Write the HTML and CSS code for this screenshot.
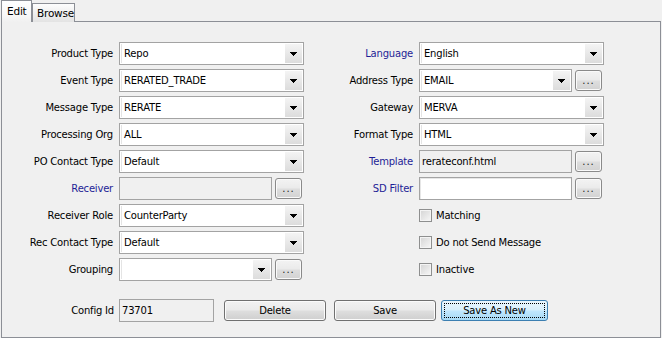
FILE: index.html
```html
<!DOCTYPE html>
<html lang="en">
<head>
  <meta charset="UTF-8">
  <title>Message Config</title>
  <link rel="stylesheet" href="styles.css">
</head>
<body>
  <div class="window">
    <div class="tabs">
      <div class="tab active">Edit</div>
      <div class="tab">Browse</div>
    </div>

    <div class="panel">
      <div class="form">
        <div class="col">
          <div class="row">
            <span class="lbl">Product Type</span>
            <div class="combo"><span class="val">Repo</span><span class="arrow"><svg width="7" height="4" viewBox="0 0 7 4"><polygon points="0,0 7,0 3.5,4" /></svg></span></div>
          </div>
          <div class="row">
            <span class="lbl">Event Type</span>
            <div class="combo"><span class="val">RERATED_TRADE</span><span class="arrow"><svg width="7" height="4" viewBox="0 0 7 4"><polygon points="0,0 7,0 3.5,4" /></svg></span></div>
          </div>
          <div class="row">
            <span class="lbl">Message Type</span>
            <div class="combo"><span class="val">RERATE</span><span class="arrow"><svg width="7" height="4" viewBox="0 0 7 4"><polygon points="0,0 7,0 3.5,4" /></svg></span></div>
          </div>
          <div class="row">
            <span class="lbl">Processing Org</span>
            <div class="combo"><span class="val">ALL</span><span class="arrow"><svg width="7" height="4" viewBox="0 0 7 4"><polygon points="0,0 7,0 3.5,4" /></svg></span></div>
          </div>
          <div class="row">
            <span class="lbl">PO Contact Type</span>
            <div class="combo"><span class="val">Default</span><span class="arrow"><svg width="7" height="4" viewBox="0 0 7 4"><polygon points="0,0 7,0 3.5,4" /></svg></span></div>
          </div>
          <div class="row">
            <span class="lbl link">Receiver</span>
            <div class="field short disabled"></div>
            <div class="dots">...</div>
          </div>
          <div class="row">
            <span class="lbl">Receiver Role</span>
            <div class="combo"><span class="val">CounterParty</span><span class="arrow"><svg width="7" height="4" viewBox="0 0 7 4"><polygon points="0,0 7,0 3.5,4" /></svg></span></div>
          </div>
          <div class="row">
            <span class="lbl">Rec Contact Type</span>
            <div class="combo"><span class="val">Default</span><span class="arrow"><svg width="7" height="4" viewBox="0 0 7 4"><polygon points="0,0 7,0 3.5,4" /></svg></span></div>
          </div>
          <div class="row">
            <span class="lbl">Grouping</span>
            <div class="combo short"><span class="val"></span><span class="arrow"><svg width="7" height="4" viewBox="0 0 7 4"><polygon points="0,0 7,0 3.5,4" /></svg></span></div>
            <div class="dots">...</div>
          </div>
        </div>

        <div class="col">
          <div class="row">
            <span class="lbl link">Language</span>
            <div class="combo"><span class="val">English</span><span class="arrow"><svg width="7" height="4" viewBox="0 0 7 4"><polygon points="0,0 7,0 3.5,4" /></svg></span></div>
          </div>
          <div class="row">
            <span class="lbl">Address Type</span>
            <div class="combo short"><span class="val">EMAIL</span><span class="arrow"><svg width="7" height="4" viewBox="0 0 7 4"><polygon points="0,0 7,0 3.5,4" /></svg></span></div>
            <div class="dots">...</div>
          </div>
          <div class="row">
            <span class="lbl">Gateway</span>
            <div class="combo"><span class="val">MERVA</span><span class="arrow"><svg width="7" height="4" viewBox="0 0 7 4"><polygon points="0,0 7,0 3.5,4" /></svg></span></div>
          </div>
          <div class="row">
            <span class="lbl">Format Type</span>
            <div class="combo"><span class="val">HTML</span><span class="arrow"><svg width="7" height="4" viewBox="0 0 7 4"><polygon points="0,0 7,0 3.5,4" /></svg></span></div>
          </div>
          <div class="row">
            <span class="lbl link">Template</span>
            <div class="field short disabled">rerateconf.html</div>
            <div class="dots">...</div>
          </div>
          <div class="row">
            <span class="lbl link">SD Filter</span>
            <div class="field short"></div>
            <div class="dots">...</div>
          </div>
          <div class="row">
            <span class="lbl"></span>
            <span class="check"></span><span class="check-text">Matching</span>
          </div>
          <div class="row">
            <span class="lbl"></span>
            <span class="check"></span><span class="check-text">Do not Send Message</span>
          </div>
          <div class="row">
            <span class="lbl"></span>
            <span class="check"></span><span class="check-text">Inactive</span>
          </div>
        </div>
      </div>

      <div class="footer">
        <span class="lbl">Config Id</span>
        <div class="field id disabled">73701</div>
        <div class="btn delete">Delete</div>
        <div class="btn save">Save</div>
        <div class="btn save-new"><span class="focus">Save As New</span></div>
      </div>
    </div>
  </div>
</body>
</html>
```

FILE: styles.css
```css
body {
  margin: 0;
  background: #f0f0f0;
  font-family: "DejaVu Sans", Verdana, sans-serif;
  font-size: 10px;
  letter-spacing: -0.2px;
  color: #000;
  width: 662px;
  height: 338px;
  overflow: hidden;
}

.window {
  padding: 1px 1px 0 1px;
}

.tabs {
  display: flex;
  align-items: flex-end;
  height: 21px;
  margin-bottom: -1px;
}

.tab {
  box-sizing: border-box;
  height: 19px;
  width: 43px;
  padding: 3px 0 0 4px;
  border: 1px solid #8c8f96;
  border-bottom: none;
  background: linear-gradient(#fdfdfd, #e3e3e3);
  font-size: 10.5px;
}

.tab.active {
  position: relative;
  height: 22px;
  width: 31px;
  padding: 4px 0 0 5px;
  background: linear-gradient(#ffffff, #f8f8f8 70%, #f0f0f0);
}

.panel {
  box-sizing: border-box;
  height: 317px;
  border: 1px solid #8c8f96;
  padding: 20px 0 0 0;
}

.form {
  display: flex;
}

.col {
  width: 300px;
  display: flex;
  flex-direction: column;
  gap: 4px;
}

.row {
  display: flex;
  align-items: center;
  height: 23px;
}

.lbl {
  width: 111px;
  margin-right: 6px;
  text-align: right;
  flex-shrink: 0;
}

.lbl.link {
  color: #1e1e96;
}

.combo {
  box-sizing: border-box;
  width: 185px;
  height: 23px;
  display: flex;
  border: 1px solid #a3a3a3;
  padding: 1px;
  background: #fff;
  flex-shrink: 0;
}

.combo.short,
.field.short {
  width: 153px;
}

.val {
  flex: 1;
  padding-left: 2px;
  line-height: 19px;
  white-space: nowrap;
  overflow: hidden;
  border-left: 1px solid #e4e4e4;
}

.arrow {
  width: 17px;
  display: flex;
  justify-content: center;
  align-items: center;
  background: linear-gradient(#f4f4f4, #dcdcdc);
}

.arrow svg {
  display: block;
  margin-top: 1px;
  shape-rendering: crispEdges;
}

.field {
  box-sizing: border-box;
  width: 185px;
  height: 23px;
  border: 1px solid #a3a3a3;
  box-shadow: inset 1px 1px 0 #e6e6e6;
  background: #fff;
  padding-left: 2px;
  line-height: 21px;
  white-space: nowrap;
  flex-shrink: 0;
}

.field.disabled {
  background: #f0f0f0;
  box-shadow: none;
}

.dots {
  box-sizing: border-box;
  width: 28px;
  height: 21px;
  margin-left: 3px;
  border: 1px solid #8a8a8a;
  border-radius: 3px;
  background: linear-gradient(#f3f3f3, #ebebeb 45%, #dddddd 55%, #d2d2d2);
  box-shadow: inset 0 0 0 1px #fafafa;
  text-align: center;
  color: #222;
  font-size: 10px;
  line-height: 19px;
  letter-spacing: 1px;
}

.check {
  box-sizing: border-box;
  width: 13px;
  height: 13px;
  border: 1px solid #8e8f8f;
  background: linear-gradient(135deg, #d4d4d4, #f7f7f7);
  box-shadow: inset 0 0 0 1px #f4f4f4;
  flex-shrink: 0;
}

.check-text {
  margin-left: 4px;
}

.footer {
  display: flex;
  align-items: center;
  margin-top: 18px;
}

.footer .lbl {
  width: 112px;
  margin-right: 5px;
}

.field.id {
  width: 95px;
}

.btn {
  box-sizing: border-box;
  width: 102px;
  height: 21px;
  border: 1px solid #707070;
  border-radius: 3px;
  background: linear-gradient(#f2f2f2, #ebebeb 45%, #dddddd 55%, #cfcfcf);
  box-shadow: inset 0 0 0 1px #fbfbfb;
  text-align: center;
  line-height: 19px;
}

.btn.delete {
  margin-left: 10px;
}

.btn.save {
  margin-left: 8px;
}

.btn.save-new {
  width: 107px;
  margin-left: 5px;
  padding: 2px;
  border-color: #3c7fb1;
  background: linear-gradient(#eaf6fd, #d9f0fc 45%, #bee6fd 55%, #a7d9f5);
  box-shadow: none;
  line-height: 13px;
}

.focus {
  display: block;
  height: 15px;
  border: 1px dotted #000;
  box-sizing: border-box;
}
```
